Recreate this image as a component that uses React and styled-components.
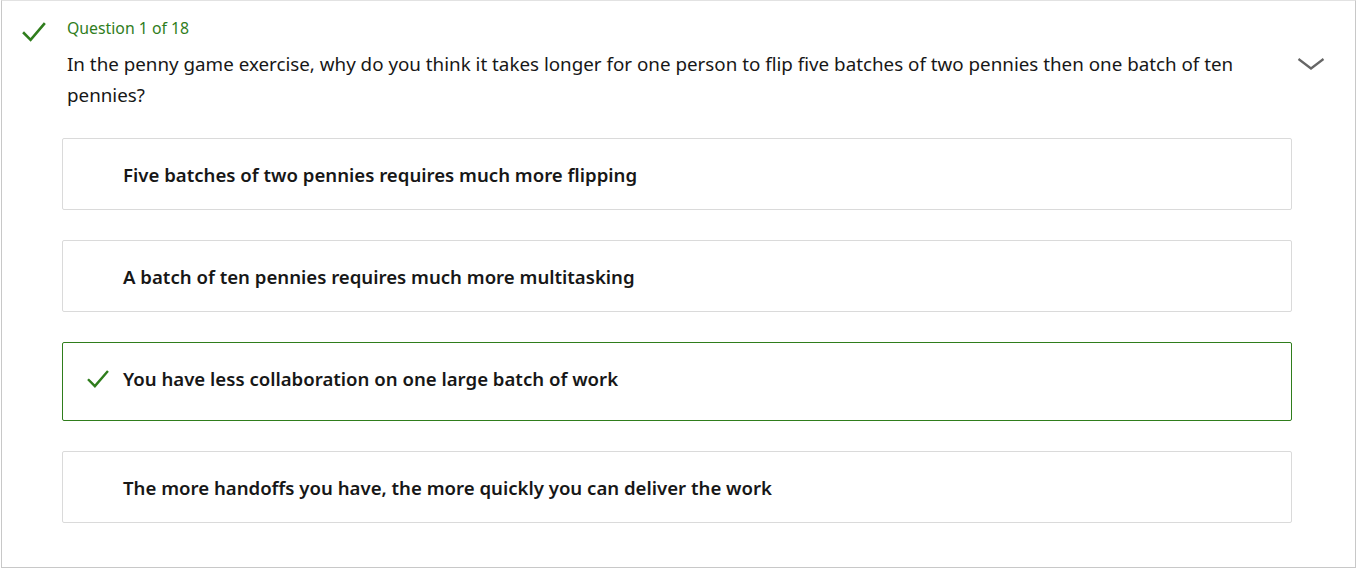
import React from "react";
import styled, { createGlobalStyle } from "styled-components";

const GlobalStyle = createGlobalStyle`
  html, body {
    margin: 0;
    padding: 0;
    background: #ffffff;
  }
  body {
    font-family: "Noto Sans", "Open Sans", sans-serif;
    color: #171717;
  }
`;

const question = {
  index: 1,
  total: 18,
  text: "In the penny game exercise, why do you think it takes longer for one person to flip five batches of two pennies then one batch of ten pennies?",
  options: [
    { text: "Five batches of two pennies requires much more flipping" },
    { text: "A batch of ten pennies requires much more multitasking" },
    { text: "You have less collaboration on one large batch of work", correct: true },
    { text: "The more handoffs you have, the more quickly you can deliver the work" },
  ],
};

const CheckIcon = ({ size = 22 }) => (
  <svg width={size} height={size} viewBox="0 0 24 24" fill="none">
    <path d="M2 13.2 L8.6 19.8 L22 4.2" stroke="#2f7d1c" strokeWidth="2.6" strokeLinecap="square" strokeLinejoin="miter" />
  </svg>
);

const ChevronIcon = () => (
  <svg width="28" height="14" viewBox="0 0 28 14" fill="none">
    <path d="M1.5 2 L14 11.5 L26.5 2" stroke="#666" strokeWidth="2.2" />
  </svg>
);

export default function App() {
  return (
    <>
      <GlobalStyle />
      <Panel>
        <Header>
          <StatusCol>
            <CheckIcon size={24} />
          </StatusCol>
          <HeaderText>
            <Counter>
              Question {question.index} of {question.total}
            </Counter>
            <QuestionText>{question.text}</QuestionText>
          </HeaderText>
          <Toggle>
            <ChevronIcon />
          </Toggle>
        </Header>
        <OptionList>
          {question.options.map((o) => (
            <Option key={o.text} $correct={o.correct}>
              <OptionMark>{o.correct && <CheckIcon size={22} />}</OptionMark>
              <OptionText>{o.text}</OptionText>
            </Option>
          ))}
        </OptionList>
      </Panel>
    </>
  );
}

const Panel = styled.div`
  margin: 0 1px;
  height: 568px;
  box-sizing: border-box;
  border: 1px solid #c8c8c8;
  border-top-color: #e2e2e2;
  background: #fff;
`;

const Header = styled.div`
  display: flex;
  align-items: flex-start;
  padding: 17px 0 0 20px;
`;

const StatusCol = styled.div`
  width: 45px;
  flex: none;
  display: flex;
  padding-top: 2px;
`;

const HeaderText = styled.div`
  flex: 1;
  display: flex;
  flex-direction: column;
`;

const Counter = styled.div`
  font-size: 15.8px;
  line-height: 20px;
  color: #2f7d1c;
`;

const QuestionText = styled.p`
  margin: 11px 0 0;
  font-size: 18.8px;
  line-height: 31px;
  color: #171717;
`;

const Toggle = styled.div`
  flex: none;
  width: 88px;
  display: flex;
  justify-content: center;
  padding-top: 39px;
  padding-left: 6px;
`;

const OptionList = styled.div`
  display: flex;
  flex-direction: column;
  gap: 30px;
  padding: 27px 63px 0 60px;
`;

const Option = styled.div`
  display: flex;
  align-items: center;
  box-sizing: border-box;
  height: ${(p) => (p.$correct ? "79px" : "72px")};
  border: 1px solid ${(p) => (p.$correct ? "#2f7d1c" : "#dadada")};
  border-radius: 2px;
  padding-left: 24px;
  padding-bottom: ${(p) => (p.$correct ? "6px" : "0")};
`;

const OptionMark = styled.div`
  width: 36px;
  flex: none;
  display: flex;
  align-items: center;
`;

const OptionText = styled.span`
  font-size: 18.6px;
  font-weight: 600;
  color: #171717;
`;
